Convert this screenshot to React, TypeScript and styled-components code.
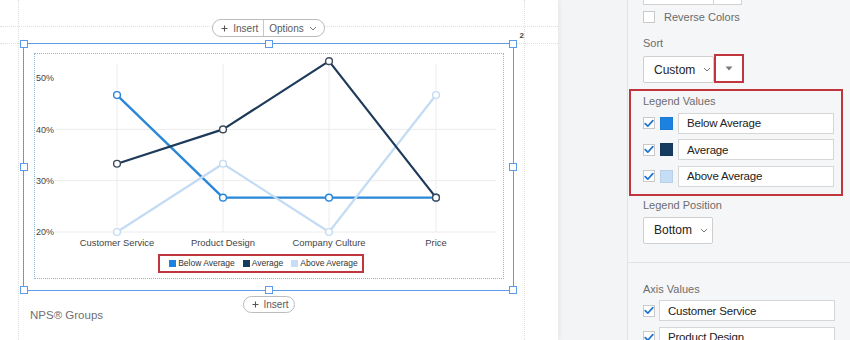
import React from 'react';
import styled, { createGlobalStyle } from 'styled-components';

const Global = createGlobalStyle`
  html, body { margin: 0; padding: 0; }
  body { font-family: "Liberation Sans", Arial, sans-serif; background: #f3f4f6; }
  * { box-sizing: border-box; }
`;

const Screen = styled.div`
  display: flex;
  width: 850px;
  height: 340px;
  overflow: hidden;
`;

/* ---------- left page ---------- */
const Page = styled.div`
  position: relative;
  flex: none;
  width: 558px;
  height: 340px;
  background: #fff;
  box-shadow: 1px 0 5px rgba(0, 0, 0, 0.07);
  display: flex;
  flex-direction: column;
  padding: 19px 0 0 23px;
  z-index: 1;
`;

const GuideV = styled.div<{ $x: number }>`
  position: absolute;
  top: 0;
  bottom: 0;
  left: ${p => p.$x}px;
  border-left: 1px dotted #dedede;
`;

const GuideH = styled.div<{ $y: number }>`
  position: absolute;
  left: 0;
  right: 0;
  top: ${p => p.$y}px;
  border-top: 1px dotted #dedede;
`;

const Block = styled.div`
  position: relative;
  width: 491px;
  display: flex;
  flex-direction: column;
`;

const Toolbar = styled.div`
  display: flex;
  justify-content: center;
  position: relative;
  z-index: 2;
`;

const Pill = styled.div<{ $h: number }>`
  display: inline-flex;
  height: ${p => p.$h}px;
  border: 1px solid #bcbcbc;
  border-radius: 10px;
  background: #fff;
  overflow: hidden;
`;

const PillPart = styled.div<{ $divider?: boolean }>`
  display: flex;
  align-items: center;
  gap: 5px;
  padding: ${p => (p.$divider ? '0 7px 0 5px' : '0 5px 0 8px')};
  font-size: 10px;
  color: #5a5a5a;
  border-left: ${p => (p.$divider ? '1px solid #c8c8c8' : 'none')};
`;

const Frame = styled.div`
  position: relative;
  margin-top: 6px;
  width: 491px;
  height: 248px;
  border: 1.5px solid #5c9ce6;
  padding: 8.5px 9.5px 11.5px 9.5px;
`;

const Handle = styled.div<{ $x: number; $y: number }>`
  position: absolute;
  left: calc(${p => p.$x}% - 4px);
  top: calc(${p => p.$y}% - 4px);
  width: 8px;
  height: 8px;
  background: #fff;
  border: 1.5px solid #5c9ce6;
`;

const Badge = styled.span`
  position: absolute;
  top: -13px;
  right: -11px;
  font-size: 8px;
  font-weight: bold;
  color: #444;
`;

const Inner = styled.div`
  height: 100%;
  border: 1px dotted #86b7df;
  display: flex;
  flex-direction: column;
`;

const ChartSvg = styled.svg`
  display: block;
  font-family: "Liberation Sans", Arial, sans-serif;
`;

const LegendWrap = styled.div`
  display: flex;
  justify-content: center;
  padding-right: 15px;
  margin-top: 3px;
`;

const LegendBox = styled.div`
  display: flex;
  align-items: center;
  gap: 8px;
  height: 19px;
  border: 2px solid #c1353f;
  padding: 0 4px 0 9px;
`;

const LegendItem = styled.div`
  display: flex;
  align-items: center;
  gap: 2px;
  font-size: 8.5px;
  color: #333;
`;

const LegendSwatch = styled.span<{ $c: string }>`
  width: 7px;
  height: 7px;
  background: ${p => p.$c};
`;

const BottomInsert = styled.div`
  position: absolute;
  left: 50%;
  bottom: -23px;
  transform: translateX(-50%);
  z-index: 2;
`;

const SectionTitle = styled.div`
  margin-top: 18px;
  padding-left: 7px;
  font-size: 11.5px;
  color: #707070;
`;

/* ---------- gutter + panel ---------- */
const Gutter = styled.div`
  flex: none;
  width: 69px;
  background: #f3f4f6;
`;

const Panel = styled.div`
  flex: none;
  width: 223px;
  background: #f5f6f8;
  border-left: 1px solid #e2e3e7;
  display: flex;
  flex-direction: column;
`;

const Section = styled.div`
  display: flex;
  flex-direction: column;
  padding: 0 15px 0 15px;
`;

const Stub = styled.div`
  display: flex;
  margin-top: -22px;
  height: 27px;
`;

const StubCell = styled.div<{ $w: number }>`
  width: ${p => p.$w}px;
  border: 1px solid #d3d3d3;
  background: #fff;
  & + & { border-left: none; }
`;

const CheckLine = styled.div<{ $mt?: number }>`
  display: flex;
  align-items: center;
  gap: 9px;
  margin-top: ${p => p.$mt ?? 0}px;
  font-size: 11px;
  color: #6a6a6a;
`;

const Box = styled.span`
  flex: none;
  width: 12px;
  height: 12px;
  border: 1px solid #c9c9c9;
  background: #fff;
  display: flex;
  align-items: center;
  justify-content: center;
`;

const Label = styled.div<{ $mt: number }>`
  margin-top: ${p => p.$mt}px;
  font-size: 11px;
  line-height: 13px;
  color: #6d6d6d;
`;

const SelectRow = styled.div`
  display: flex;
  align-items: flex-end;
  margin-top: 4px;
`;

const Select = styled.div<{ $w: number; $mt?: number }>`
  width: ${p => p.$w}px;
  height: 27px;
  margin-top: ${p => p.$mt ?? 0}px;
  border: 1px solid #cfcfcf;
  border-radius: 2px;
  background: #fff;
  display: flex;
  align-items: center;
  gap: 8px;
  padding-left: 10px;
  font-size: 12px;
  color: #222;
`;

const MenuButton = styled.div`
  width: 30px;
  height: 29px;
  border: 2px solid #c1353f;
  background: #fff;
  display: flex;
  align-items: center;
  justify-content: center;
`;

const Highlight = styled.div`
  margin: 6px 7px 0 1px;
  border: 2px solid #c1353f;
  padding: 4px 7px 7px 12px;
  display: flex;
  flex-direction: column;
`;

const Rows = styled.div<{ $mt: number }>`
  display: flex;
  flex-direction: column;
  gap: 5.5px;
  margin-top: ${p => p.$mt}px;
`;

const ValueRow = styled.div<{ $gap: number }>`
  display: flex;
  align-items: center;
  gap: ${p => p.$gap}px;
`;

const ColorChip = styled.span<{ $c: string }>`
  flex: none;
  width: 13px;
  height: 13px;
  background: ${p => p.$c};
  border: 1px solid rgba(0, 0, 0, 0.06);
`;

const TextInput = styled.div`
  flex: 1;
  height: 21px;
  border: 1px solid #d6d6d6;
  background: #fff;
  display: flex;
  align-items: center;
  padding-left: 8px;
  font-size: 11.5px;
  letter-spacing: -0.2px;
  color: #222;
`;

const Divider = styled.div`
  margin-top: 18px;
  border-top: 1px solid #e1e2e6;
`;

/* ---------- icons ---------- */
const Check = () => (
  <svg width="10" height="9" viewBox="0 0 10 9">
    <path d="M1.2 4.6 L3.8 7.2 L8.8 1.6" fill="none" stroke="#1a74cf" strokeWidth="1.7" strokeLinecap="round" strokeLinejoin="round" />
  </svg>
);

const Chevron = () => (
  <svg width="8" height="5" viewBox="0 0 8 5">
    <path d="M1 1 L4 4 L7 1" fill="none" stroke="#777" strokeWidth="1" />
  </svg>
);

const Caret = () => (
  <svg width="8" height="5" viewBox="0 0 8 5">
    <path d="M0.5 0.5 H7.5 L4 4.5 Z" fill="#7a7a7a" />
  </svg>
);

const Plus = () => (
  <svg width="7" height="7" viewBox="0 0 7 7">
    <path d="M3.5 0.5 V6.5 M0.5 3.5 H6.5" stroke="#555" strokeWidth="1.1" />
  </svg>
);

/* ---------- data ---------- */
const C_BELOW = '#2a87d8';
const C_AVG = '#1d3a5b';
const C_ABOVE = '#c4dbf4';

const xs = [82, 188, 294, 401];
const yOf = (v: number) => 178 - (v - 20) * 5.13;
const cats = ['Customer Service', 'Product Design', 'Company Culture', 'Price'];
const series = [
  { name: 'Below Average', color: C_BELOW, w: 2.4, values: [46.7, 26.7, 26.7, 26.7] },
  { name: 'Above Average', color: C_ABOVE, w: 2.2, values: [20, 33.3, 20, 46.7] },
  { name: 'Average', color: C_AVG, w: 2.2, values: [33.3, 40, 53.3, 26.7] },
];
const ticks = [50, 40, 30, 20];

const Chart = () => (
  <ChartSvg width="467" height="197" viewBox="0 0 467 197">
    {ticks.slice(1).map(t => (
      <line key={t} x1="20" x2="461" y1={yOf(t)} y2={yOf(t)} stroke="#ececec" strokeWidth="1" />
    ))}
    {xs.map(x => (
      <line key={x} x1={x} x2={x} y1="10" y2="178" stroke="#ececec" strokeWidth="1" />
    ))}
    {ticks.map(t => (
      <text key={t} x="1" y={yOf(t) + 3.2} fontSize="9" fill="#444">{t}%</text>
    ))}
    {cats.map((c, i) => (
      <text key={c} x={xs[i]} y="191.5" fontSize="9.4" fill="#444" textAnchor="middle">{c}</text>
    ))}
    {series.map(s => (
      <g key={s.name}>
        <polyline
          points={s.values.map((v, i) => `${xs[i]},${yOf(v)}`).join(' ')}
          fill="none"
          stroke={s.color}
          strokeWidth={s.w}
          strokeLinejoin="round"
        />
        {s.values.map((v, i) => (
          <circle key={i} cx={xs[i]} cy={yOf(v)} r="3.4" fill="#fff" stroke={s.color === C_AVG ? '#3c4b5c' : s.color} strokeWidth="1.4" />
        ))}
      </g>
    ))}
  </ChartSvg>
);

const handles: [number, number][] = [
  [0, 0], [50, 0], [100, 0],
  [0, 50], [100, 50],
  [0, 100], [50, 100], [100, 100],
];

const legendValues = [
  { label: 'Below Average', color: '#1b82df' },
  { label: 'Average', color: '#173a5f' },
  { label: 'Above Average', color: '#c6ddf6' },
];

export default function App() {
  return (
    <>
      <Global />
      <Screen>
        <Page>
          <GuideV $x={18} />
          <GuideV $x={524} />
          <GuideH $y={26} />
          <GuideH $y={43} />
          <Block>
            <Toolbar>
              <Pill $h={18}>
                <PillPart><Plus />Insert</PillPart>
                <PillPart $divider>Options <Chevron /></PillPart>
              </Pill>
            </Toolbar>
            <Frame>
              {handles.map(([x, y]) => (
                <Handle key={`${x}-${y}`} $x={x} $y={y} />
              ))}
              <Badge>2</Badge>
              <Inner>
                <Chart />
                <LegendWrap>
                  <LegendBox>
                    {legendValues.map(l => (
                      <LegendItem key={l.label}>
                        <LegendSwatch $c={l.color} />
                        {l.label}
                      </LegendItem>
                    ))}
                  </LegendBox>
                </LegendWrap>
              </Inner>
              <BottomInsert>
                <Pill $h={17}>
                  <PillPart><Plus />Insert</PillPart>
                </Pill>
              </BottomInsert>
            </Frame>
            <SectionTitle>NPS® Groups</SectionTitle>
          </Block>
        </Page>
        <Gutter />
        <Panel>
          <Section>
            <Stub>
              <StubCell $w={71} />
              <StubCell $w={28} />
            </Stub>
            <CheckLine $mt={6}>
              <Box />
              Reverse Colors
            </CheckLine>
            <Label $mt={14}>Sort</Label>
            <SelectRow>
              <Select $w={71}>Custom <Chevron /></Select>
              <MenuButton><Caret /></MenuButton>
            </SelectRow>
          </Section>
          <Highlight>
            <Label $mt={0}>Legend Values</Label>
            <Rows $mt={4.5}>
              {legendValues.map(l => (
                <ValueRow key={l.label} $gap={5}>
                  <Box><Check /></Box>
                  <ColorChip $c={l.color} />
                  <TextInput>{l.label}</TextInput>
                </ValueRow>
              ))}
            </Rows>
          </Highlight>
          <Section>
            <Label $mt={3}>Legend Position</Label>
            <Select $w={70} $mt={5}>Bottom <Chevron /></Select>
          </Section>
          <Divider />
          <Section>
            <Label $mt={20}>Axis Values</Label>
            <Rows $mt={4.5}>
              {['Customer Service', 'Product Design'].map(c => (
                <ValueRow key={c} $gap={4}>
                  <Box><Check /></Box>
                  <TextInput>{c}</TextInput>
                </ValueRow>
              ))}
            </Rows>
          </Section>
        </Panel>
      </Screen>
    </>
  );
}
